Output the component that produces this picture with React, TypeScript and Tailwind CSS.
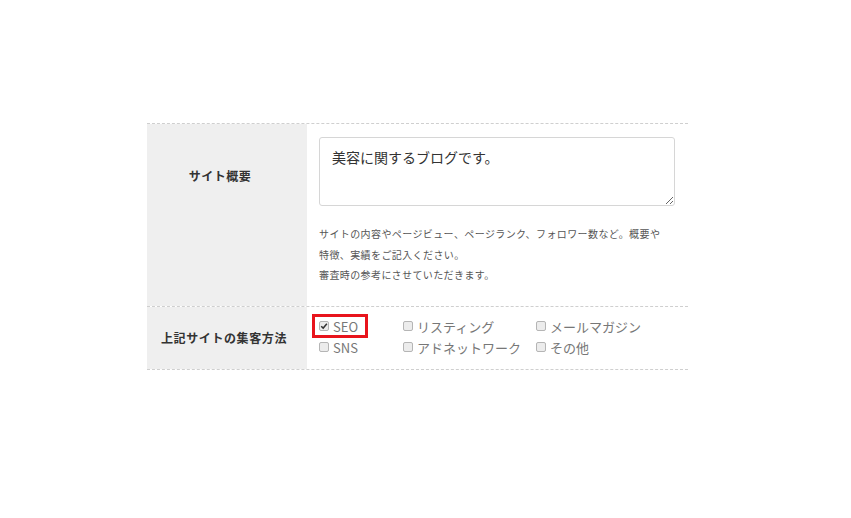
import React from "react";

const font = { fontFamily: '"Noto Sans CJK JP", "Noto Sans", sans-serif' };

function Box({ checked }: { checked?: boolean }) {
  return (
    <span className="relative inline-flex h-[10px] w-[10px] shrink-0 items-center justify-center rounded-[2px] border border-[#b5b5b5] bg-[#ececec]">
      {checked && (
        <svg viewBox="0 0 10 10" className="h-[8px] w-[8px]">
          <path d="M1.5 5.2 L4 7.6 L8.6 2.2" stroke="#333" strokeWidth="1.8" fill="none" />
        </svg>
      )}
    </span>
  );
}

function Item({ label, checked, w }: { label: string; checked?: boolean; w: string }) {
  return (
    <label className={`flex items-center gap-[4px] ${w}`}>
      <Box checked={checked} />
      <span className="text-[13px] leading-[21px] text-[#777]">{label}</span>
    </label>
  );
}

export default function App() {
  return (
    <div className="min-h-[518px] w-full bg-white pt-[123px]" style={font}>
      <div className="ml-[147px] w-[541px] border-t border-dashed border-[#cfcfcf]">
        <div className="grid grid-cols-[160px_1fr] border-b border-dashed border-[#cfcfcf]">
          <div className="flex items-start justify-center bg-[#efefef] pr-[14px] pt-[43px] text-[12px] font-bold leading-[18px] tracking-[0.5px] text-[#333]">
            サイト概要
          </div>
          <div className="pl-[12px] pr-[12px] pt-[13px] pb-[20px]">
            <textarea
              defaultValue="美容に関するブログです。"
              className="block h-[69px] w-[356px] resize-y rounded-[3px] border border-[#d6d6d6] bg-white px-[12px] py-[9px] text-[14px] leading-[20px] text-[#333] outline-none"
              style={font}
            />
            <div className="mt-[18px] text-[10px] leading-[20.5px] tracking-[0.4px] text-[#555]">
              <p>サイトの内容やページビュー、ページランク、フォロワー数など。概要や</p>
              <p>特徴、実績をご記入ください。</p>
              <p>審査時の参考にさせていただきます。</p>
            </div>
          </div>
        </div>
        <div className="grid grid-cols-[160px_1fr] border-b border-dashed border-[#cfcfcf]">
          <div className="flex items-center justify-center bg-[#efefef] pr-[6px] text-[12px] font-bold tracking-[0.6px] text-[#333]">
            上記サイトの集客方法
          </div>
          <div className="relative pl-[12px] pt-[9px] pb-[11px]">
            <div className="flex">
              <Item label="SEO" checked w="w-[84px]" />
              <Item label="リスティング" w="w-[133px]" />
              <Item label="メールマガジン" w="w-[120px]" />
            </div>
            <div className="flex">
              <Item label="SNS" w="w-[84px]" />
              <Item label="アドネットワーク" w="w-[133px]" />
              <Item label="その他" w="w-[120px]" />
            </div>
            <div className="pointer-events-none absolute left-[5px] top-[7px] h-[24px] w-[56px] border-[3px] border-[#e8141c]" />
          </div>
        </div>
      </div>
    </div>
  );
}
